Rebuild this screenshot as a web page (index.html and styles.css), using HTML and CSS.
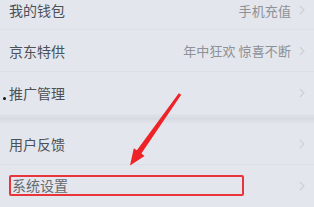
FILE: index.html
```html
<!DOCTYPE html>
<html lang="zh">
<head>
<meta charset="utf-8">
<link rel="stylesheet" href="styles.css">
</head>
<body>
<div class="screen">
  <div class="group">
    <div class="row first">
      <span class="label">我的钱包</span>
      <span class="extra">手机充值</span>
      <svg class="chev" width="6" height="10" viewBox="0 0 6 10"><polyline points="1,1 5,5 1,9" fill="none" stroke="#cdd0d6" stroke-width="1.2"/></svg>
    </div>
    <div class="row">
      <span class="label">京东特供</span>
      <span class="extra">年中狂欢 惊喜不断</span>
      <svg class="chev" width="6" height="10" viewBox="0 0 6 10"><polyline points="1,1 5,5 1,9" fill="none" stroke="#cdd0d6" stroke-width="1.2"/></svg>
    </div>
    <div class="row last">
      <span class="dot"></span>
      <span class="label">推广管理</span>
      <span class="extra"></span>
      <svg class="chev" width="6" height="10" viewBox="0 0 6 10"><polyline points="1,1 5,5 1,9" fill="none" stroke="#cdd0d6" stroke-width="1.2"/></svg>
    </div>
  </div>
  <div class="band"></div>
  <div class="group">
    <div class="row">
      <span class="label">用户反馈</span>
      <span class="extra"></span>
      <svg class="chev" width="6" height="10" viewBox="0 0 6 10"><polyline points="1,1 5,5 1,9" fill="none" stroke="#cdd0d6" stroke-width="1.2"/></svg>
    </div>
    <div class="row last">
      <span class="label boxed">系统设置</span>
      <span class="extra"></span>
      <svg class="chev" width="6" height="10" viewBox="0 0 6 10"><polyline points="1,1 5,5 1,9" fill="none" stroke="#cdd0d6" stroke-width="1.2"/></svg>
    </div>
  </div>
  <svg class="arrow" width="314" height="207" viewBox="0 0 314 207">
    <polygon points="181.2,94.8 141.4,153.6 144.6,156 130,165.5 133.8,148.2 136.9,150.3 178.8,93.2" fill="#ee2328"/>
  </svg>
</div>
</body>
</html>
```
FILE: styles.css
```css
html, body {
  margin: 0;
  padding: 0;
  background: #e3e6ec;
}
.screen {
  position: relative;
  width: 314px;
  height: 207px;
  overflow: hidden;
  background: #e3e6ec;
  font-family: "Noto Sans CJK SC", "Noto Sans", sans-serif;
}
.group {
  display: flex;
  flex-direction: column;
}
.row {
  position: relative;
  display: flex;
  align-items: center;
  height: 42px;
  padding: 0 9px 0 9px;
  box-sizing: border-box;
  border-bottom: 1px solid #dcdfe5;
}
.row.first {
  height: 30px;
  padding-bottom: 9px;
}
.row.last {
  border-bottom: none;
}
.label {
  font-size: 14px;
  color: #4c5057;
  line-height: 20px;
}
.extra {
  flex: 1;
  text-align: right;
  font-size: 13px;
  color: #8e9197;
  margin-right: 8px;
  letter-spacing: 0.1px;
}
.chev {
  flex: none;
}
.band {
  height: 9px;
  background: linear-gradient(#e0e3e9, #d7dae0 50%, #e0e3e9);
}
.boxed {
  width: 235px;
  height: 21px;
  box-sizing: border-box;
  border: 2px solid #e8343a;
  border-radius: 2px;
  padding-left: 1px;
  line-height: 17px;
  margin-top: -2px;
  color: #666a71;
}
.dot {
  position: absolute;
  left: 3px;
  top: 25px;
  width: 3px;
  height: 3px;
  border-radius: 50%;
  background: #111;
}
.arrow {
  position: absolute;
  left: 0;
  top: 0;
  pointer-events: none;
}
```
